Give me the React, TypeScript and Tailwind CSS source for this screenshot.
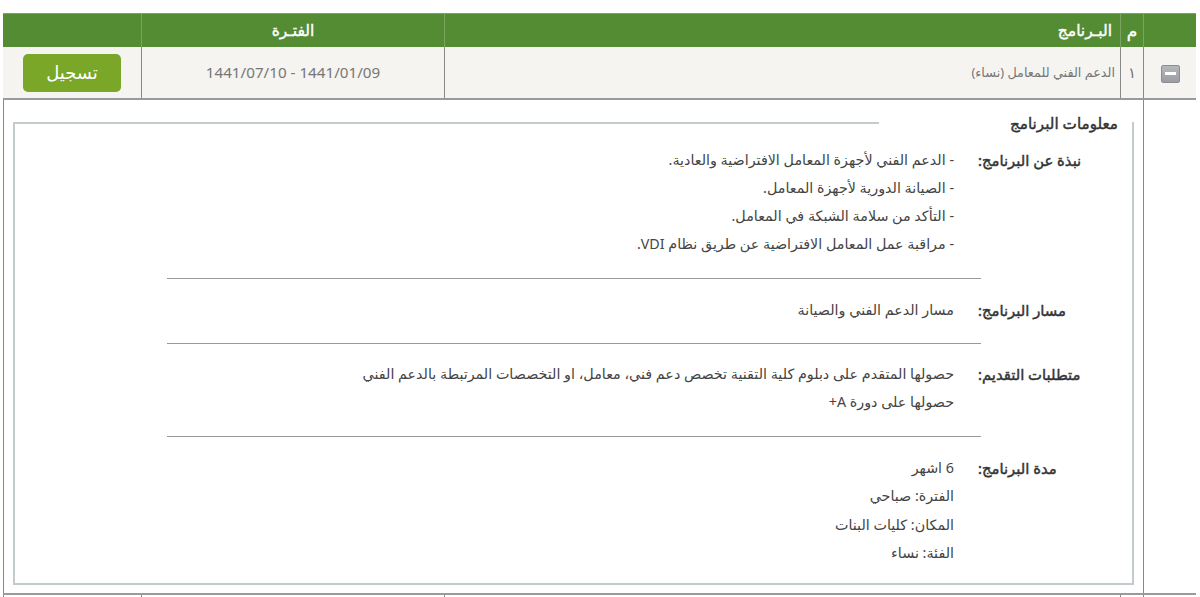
const font = { fontFamily: '"Noto Sans", "DejaVu Sans", sans-serif' };

function InfoRow({ label, lines, leading = "leading-[28px]" }: { label: string; lines: string[]; leading?: string }) {
  return (
    <div className="flex justify-start">
      <div className="w-[105px] shrink-0 text-left text-[14.8px] leading-[28px] text-[#333] [-webkit-text-stroke:0.45px_#333]">{label}</div>
      <div className={"mr-[24px] text-[14.3px] text-[#444] " + leading}>
        {lines.map((l) => (
          <div key={l}>{l}</div>
        ))}
      </div>
    </div>
  );
}

function Divider({ className }: { className: string }) {
  return <div className={"mr-[102px] h-px w-[814px] bg-[#9a9a9a] " + className} />;
}

export default function App() {
  return (
    <div dir="rtl" style={font} className="h-[597px] w-[1200px] overflow-hidden bg-white pt-[13px] pr-[4px] pl-[3px]">
      <div className="flex h-[34px] border-t border-[#8a9a80] bg-[#548c34] text-[15.5px] text-white [-webkit-text-stroke:0.4px_#fff]">
        <div className="w-[53px] shrink-0 border-l border-[#7ba563]" />
        <div className="flex w-[23px] shrink-0 items-center justify-center border-l border-[#7ba563] text-[17px]">م</div>
        <div className="flex w-[676px] shrink-0 items-center border-l border-[#7ba563] pr-[8px]">البـرنامج</div>
        <div className="flex w-[303px] shrink-0 items-center justify-center border-l border-[#7ba563]">الفتـرة</div>
        <div className="flex-1" />
      </div>
      <div className="flex h-[53px] border-b-2 border-[#9a9a9a] bg-[#f5f4f1] text-[#777]">
        <div className="flex w-[53px] shrink-0 items-center justify-center border-l border-[#888] pt-[2px]">
          <div className="flex h-[18px] w-[19px] items-center justify-center rounded-[2px] border border-[#8b8f93] bg-gradient-to-b from-[#b5b8bb] to-[#9a9ea2]">
            <div className="h-[3px] w-[11px] bg-white" />
          </div>
        </div>
        <div className="flex w-[23px] shrink-0 items-center justify-center border-l border-[#888] text-[15px]">١</div>
        <div className="flex w-[676px] shrink-0 items-center border-l border-[#888] pr-[5px] text-[12.8px]">الدعم الفني للمعامل (نساء)</div>
        <div className="flex w-[303px] shrink-0 items-center justify-center border-l border-[#888] text-[15.2px]">
          <span dir="ltr">1441/07/10 - 1441/01/09</span>
        </div>
        <div className="flex flex-1 items-center justify-center">
          <button className="flex h-[38px] w-[98px] items-center justify-center rounded-[5px] bg-[#7aa728] text-[18px] text-white">تسجيل</button>
        </div>
      </div>
      <div className="flex h-[495px] border-b-2 border-[#9a9a9a]">
        <div className="w-[53px] shrink-0 border-l border-[#888]" />
        <div className="flex-1 border-l border-[#888] pt-[15px] pr-[9px] pl-[9px]">
          <fieldset className="h-[470px] border-2 border-[#c4cbcf] pt-[15px] pr-[49px]">
            <legend className="mr-[-49px] w-[253px] pr-[14px] text-[15.2px] leading-[16px] text-[#333] [-webkit-text-stroke:0.45px_#333]">معلومات البرنامج</legend>
            <InfoRow
              label="نبذة عن البرنامج:"
              lines={[
                "- الدعم الفني لأجهزة المعامل الافتراضية والعادية.",
                "- الصيانة الدورية لأجهزة المعامل.",
                "- التأكد من سلامة الشبكة في المعامل.",
                "- مراقبة عمل المعامل الافتراضية عن طريق نظام VDI.",
              ]}
            />
            <Divider className="mt-[20px] mb-[17px]" />
            <InfoRow label="مسار البرنامج:" lines={["مسار الدعم الفني والصيانة"]} />
            <Divider className="mt-[19px] mb-[16px]" />
            <InfoRow
              label="متطلبات التقديم:"
              lines={[
                "حصولها المتقدم على دبلوم كلية التقنية تخصص دعم فني، معامل، او التخصصات المرتبطة بالدعم الفني",
                "حصولها على دورة A+",
              ]}
            />
            <Divider className="mt-[20px] mb-[17px]" />
            <InfoRow
              label="مدة البرنامج:"
              leading="leading-[28.4px]"
              lines={["6 اشهر", "الفترة: صباحي", "المكان: كليات البنات", "الفئة: نساء"]}
            />
          </fieldset>
        </div>
      </div>
      <div className="flex h-[3px]">
        <div className="w-[53px] shrink-0 border-l border-[#888]" />
        <div className="w-[23px] shrink-0 border-l border-[#888]" />
        <div className="w-[676px] shrink-0 border-l border-[#888]" />
        <div className="w-[303px] shrink-0 border-l border-[#888]" />
        <div className="flex-1 border-l border-[#888]" />
      </div>
    </div>
  );
}
